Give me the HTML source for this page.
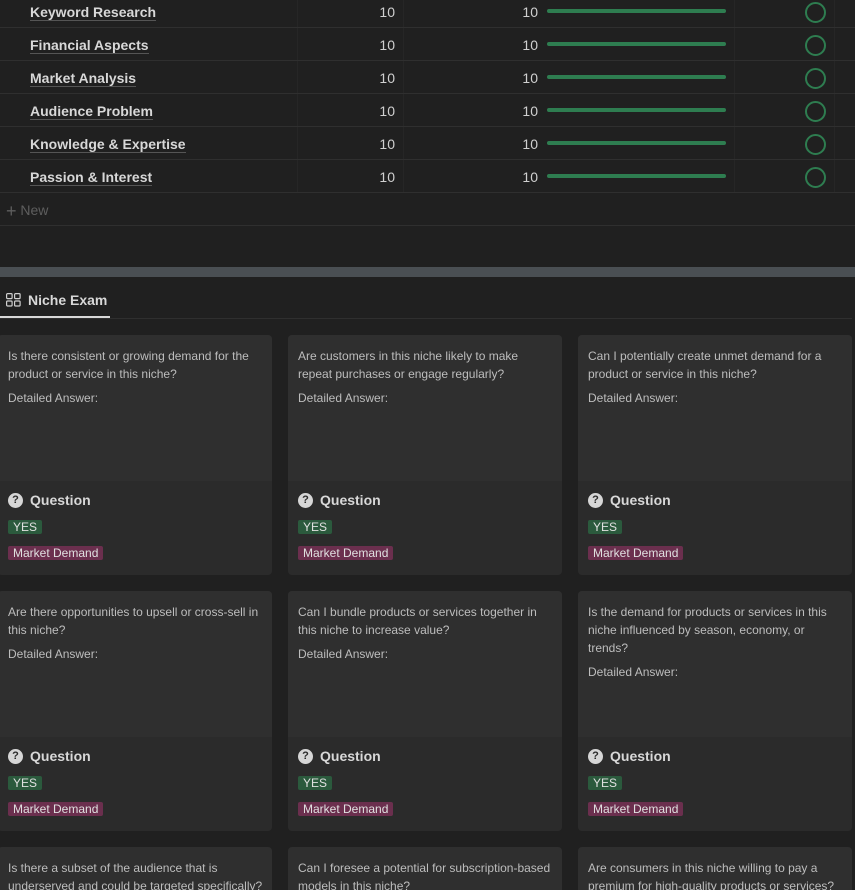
<!DOCTYPE html>
<html style="height:890px;overflow:hidden"><head><meta charset="utf-8"><style>
*{box-sizing:border-box;margin:0;padding:0}
body{width:855px;height:890px;overflow:hidden;background:#202020;font-family:"Liberation Sans",sans-serif;color:#d4d4d4;position:relative}
.row{position:absolute;left:0;width:855px;height:33px;border-bottom:1px solid #2f2f2f}
.name{position:absolute;left:30px;top:9px;font-size:14px;font-weight:bold;color:#d8d8d8;border-bottom:1px solid #555;line-height:16px}
.n1,.n2{position:absolute;font-size:14px;color:#d0d0d0;top:9px;text-align:right;width:40px}
.n1{left:355px}.n2{left:498px}
.bar{position:absolute;left:547px;top:14px;width:179px;height:4px;border-radius:2px;background:#2e7d50}
.circ{position:absolute;left:805px;top:7px;width:21px;height:21px;border:2.5px solid #2e7d50;border-radius:50%}
.vl{position:absolute;top:0;width:1px;height:193px;background:#262626}
.card{position:absolute;width:274px;height:240px;border-radius:4px;background:#2b2b2b;overflow:hidden}
.prev{height:146px;background:#2f2f2f;padding:12px 10px 0 10px;font-size:12px;line-height:18px;color:#bdbdbd}
.prev p+p{margin-top:6px}
.bot{padding:10px 10px 0}
.q{font-size:14px;font-weight:bold;color:#d8d8d8;display:flex;align-items:center;height:18px}
.qi{width:15px;height:15px;border-radius:50%;background:#d6d6d6;color:#2b2b2b;font-size:11px;font-weight:bold;text-align:center;line-height:15px;margin-right:7px}
.t{display:inline-block;font-size:12px;line-height:14px;padding:0 5px;border-radius:2px;color:#e0e0e0}
.yes{background:#2b5a3d;margin-top:11px}
.md{background:#6b2f4e;margin-top:10px}
</style></head><body>
<div class="vl" style="left:297px"></div><div class="vl" style="left:403px"></div><div class="vl" style="left:734px"></div><div class="vl" style="left:834px"></div>
<div class="row" style="top:-5px"><span class="name">Keyword Research</span><span class="n1">10</span><span class="n2">10</span><div class="bar"></div><div class="circ"></div></div>
<div class="row" style="top:28px"><span class="name">Financial Aspects</span><span class="n1">10</span><span class="n2">10</span><div class="bar"></div><div class="circ"></div></div>
<div class="row" style="top:61px"><span class="name">Market Analysis</span><span class="n1">10</span><span class="n2">10</span><div class="bar"></div><div class="circ"></div></div>
<div class="row" style="top:94px"><span class="name">Audience Problem</span><span class="n1">10</span><span class="n2">10</span><div class="bar"></div><div class="circ"></div></div>
<div class="row" style="top:127px"><span class="name">Knowledge &amp; Expertise</span><span class="n1">10</span><span class="n2">10</span><div class="bar"></div><div class="circ"></div></div>
<div class="row" style="top:160px"><span class="name">Passion &amp; Interest</span><span class="n1">10</span><span class="n2">10</span><div class="bar"></div><div class="circ"></div></div>
<div class="row" style="top:193px"><span style="position:absolute;left:6px;top:8px;font-size:14px;color:#5e5e5e"><span style="font-size:18px;vertical-align:-2px">+</span> New</span></div>
<div style="position:absolute;left:0;top:267px;width:855px;height:10px;background:#4a4f53"></div>
<div style="position:absolute;left:6px;top:292px;font-size:14px;font-weight:bold;color:#d8d8d8;display:flex;align-items:center">
<svg width="15" height="14" viewBox="0 0 15 14" style="margin-right:7px"><g fill="none" stroke="#cfcfcf" stroke-width="1.2"><rect x="0.6" y="0.6" width="5.5" height="5" rx="1"/><rect x="8.6" y="0.6" width="5.5" height="5" rx="1"/><rect x="0.6" y="8" width="5.5" height="5" rx="1"/><rect x="8.6" y="8" width="5.5" height="5" rx="1"/></g></svg>Niche Exam</div>
<div style="position:absolute;left:0;top:318px;width:852px;height:1px;background:#2f2f2f"></div>
<div style="position:absolute;left:0;top:316px;width:110px;height:2px;background:#d8d8d8"></div>

<div class="card" style="left:-2px;top:335px"><div class="prev"><p>Is there consistent or growing demand for the product or service in this niche?</p><p>Detailed Answer:</p></div><div class="bot"><div class="q"><span class="qi">?</span>Question</div><span class="t yes">YES</span><br><span class="t md">Market Demand</span></div></div>
<div class="card" style="left:288px;top:335px"><div class="prev"><p>Are customers in this niche likely to make repeat purchases or engage regularly?</p><p>Detailed Answer:</p></div><div class="bot"><div class="q"><span class="qi">?</span>Question</div><span class="t yes">YES</span><br><span class="t md">Market Demand</span></div></div>
<div class="card" style="left:578px;top:335px"><div class="prev"><p>Can I potentially create unmet demand for a product or service in this niche?</p><p>Detailed Answer:</p></div><div class="bot"><div class="q"><span class="qi">?</span>Question</div><span class="t yes">YES</span><br><span class="t md">Market Demand</span></div></div>

<div class="card" style="left:-2px;top:591px"><div class="prev"><p>Are there opportunities to upsell or cross-sell in this niche?</p><p>Detailed Answer:</p></div><div class="bot"><div class="q"><span class="qi">?</span>Question</div><span class="t yes">YES</span><br><span class="t md">Market Demand</span></div></div>
<div class="card" style="left:288px;top:591px"><div class="prev"><p>Can I bundle products or services together in this niche to increase value?</p><p>Detailed Answer:</p></div><div class="bot"><div class="q"><span class="qi">?</span>Question</div><span class="t yes">YES</span><br><span class="t md">Market Demand</span></div></div>
<div class="card" style="left:578px;top:591px"><div class="prev"><p>Is the demand for products or services in this niche influenced by season, economy, or trends?</p><p>Detailed Answer:</p></div><div class="bot"><div class="q"><span class="qi">?</span>Question</div><span class="t yes">YES</span><br><span class="t md">Market Demand</span></div></div>

<div class="card" style="left:-2px;top:847px;height:43px;border-radius:4px 4px 0 0"><div class="prev" style="white-space:nowrap"><p>Is there a subset of the audience that is<br>underserved and could be targeted specifically?</p></div></div>
<div class="card" style="left:288px;top:847px;height:43px;border-radius:4px 4px 0 0"><div class="prev"><p>Can I foresee a potential for subscription-based models in this niche?</p></div></div>
<div class="card" style="left:578px;top:847px;height:43px;border-radius:4px 4px 0 0"><div class="prev" style="white-space:nowrap"><p>Are consumers in this niche willing to pay a<br>premium for high-quality products or services?</p></div></div>
</body></html>
